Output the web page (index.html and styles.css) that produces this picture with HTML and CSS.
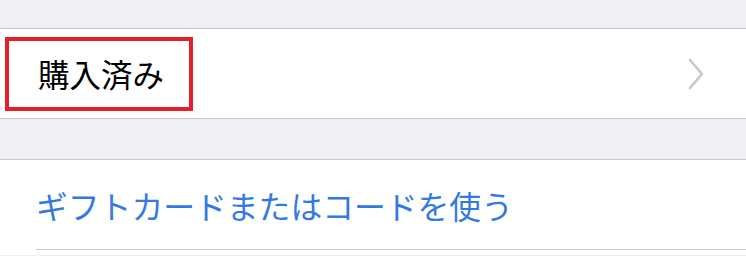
FILE: index.html
```html
<!DOCTYPE html>
<html lang="ja">
<head>
<meta charset="utf-8">
<link rel="stylesheet" href="styles.css">
</head>
<body>
<div class="spacer top"></div>
<div class="group">
  <div class="row">
    <div class="highlight"><span class="label">購入済み</span></div>
    <svg class="chevron" width="16" height="32" viewBox="0 0 16 32"><polyline points="2,2 14,16 2,30" fill="none" stroke="#c7c7cc" stroke-width="2.6" stroke-linecap="round" stroke-linejoin="round"/></svg>
  </div>
</div>
<div class="spacer mid"></div>
<div class="group last">
  <div class="row link-row">
    <span class="link">ギフトカードまたはコードを使う</span>
  </div>
</div>
</body>
</html>
```

FILE: styles.css
```css
html, body {
  margin: 0;
  padding: 0;
}
body {
  background: #efeff4;
  font-family: "Noto Sans CJK JP", "Noto Sans", sans-serif;
  width: 746px;
  height: 256px;
  overflow: hidden;
}
.spacer {
  border-bottom: 1px solid #c8c7cc;
}
.spacer.top { height: 28px; }
.spacer.mid { height: 40px; border-top: 1px solid #c8c7cc; }
.group {
  background: #fff;
}
.group.last {
  padding-bottom: 5px;
}
.row {
  height: 89px;
  display: flex;
  align-items: center;
  justify-content: space-between;
  box-sizing: border-box;
}
.highlight {
  margin-left: 5px;
  width: 188px;
  height: 74px;
  box-sizing: border-box;
  border: 4px solid #e5202a;
  display: flex;
  align-items: center;
  padding-left: 29px;
}
.label {
  font-size: 31.5px;
  color: #000;
  line-height: 1;
}
.chevron {
  margin-right: 42px;
}
.link-row {
  margin-left: 36px;
  border-bottom: 1px solid #c8c7cc;
  height: 90px;
  padding-top: 2px;
}
.link {
  font-size: 31.8px;
  color: #3479e3;
  line-height: 1;
}
```
